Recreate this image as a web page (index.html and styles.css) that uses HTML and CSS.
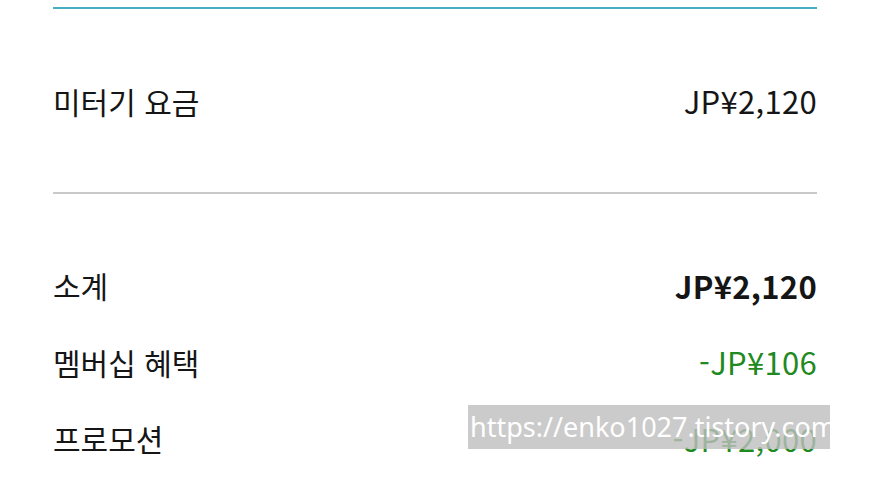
FILE: index.html
```html
<!DOCTYPE html>
<html lang="ko">
<head>
<meta charset="utf-8">
<link rel="stylesheet" href="styles.css">
</head>
<body>
<div class="page">
  <div class="rule-top"></div>
  <div class="row fare">
    <span class="label">미터기 요금</span>
    <span class="amount">JP¥2,120</span>
  </div>
  <div class="rule-gray"></div>
  <div class="summary">
    <div class="row item bold">
      <span class="label">소계</span>
      <span class="amount">JP¥2,120</span>
    </div>
    <div class="row item">
      <span class="label">멤버십 혜택</span>
      <span class="amount green">-JP¥106</span>
    </div>
    <div class="row item">
      <span class="label">프로모션</span>
      <span class="amount green">-JP¥2,000</span>
    </div>
  </div>
  <div class="watermark">https://enko1027.tistory.com</div>
</div>
</body>
</html>
```

FILE: styles.css
```css
html, body {
  margin: 0;
  padding: 0;
  background: #ffffff;
}
body {
  width: 870px;
  height: 490px;
  overflow: hidden;
  font-family: "Noto Sans CJK KR", "Noto Sans", sans-serif;
  color: #151515;
}
.page {
  position: relative;
  padding: 7px 53px 0 53px;
}
.rule-top {
  height: 2px;
  background: #45aec2;
}
.rule-gray {
  height: 2px;
  background: #c9c9c9;
}
.row {
  display: flex;
  justify-content: space-between;
  align-items: center;
  font-size: 30px;
  line-height: 1;
}
.amount {
  font-size: 31px;
  letter-spacing: 0.3px;
}
.fare {
  height: 183px;
}
.summary {
  padding-top: 53px;
}
.item {
  height: 76.5px;
}
.bold .amount {
  font-weight: 700;
}
.green {
  color: #1f8a22;
}
.watermark {
  position: absolute;
  left: 468px;
  top: 405px;
  width: 362px;
  height: 44px;
  box-sizing: border-box;
  background: rgba(190, 190, 190, 0.8);
  color: #ffffff;
  font-family: "Noto Sans", sans-serif;
  font-size: 27px;
  line-height: 44px;
  padding-left: 2px;
  white-space: nowrap;
}
```
